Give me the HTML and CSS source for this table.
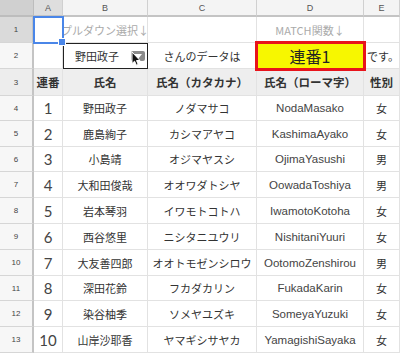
FILE: index.html
```html
<!DOCTYPE html>
<html lang="ja">
<head>
<meta charset="utf-8">
<link rel="stylesheet" href="styles.css">
</head>
<body>
<div class="sheet">
  <div class="corner"></div>
  <div class="ch sel">A</div>
  <div class="ch">B</div>
  <div class="ch">C</div>
  <div class="ch">D</div>
  <div class="ch">E</div>

  <div class="rh sel">1</div>
  <div class="c active"></div>
  <div class="c note">プルダウン選択↓</div>
  <div class="c"></div>
  <div class="c note">MATCH関数↓</div>
  <div class="c"></div>

  <div class="rh">2</div>
  <div class="c"></div>
  <div class="c dropcell">野田政子
    <span class="dd"><svg width="8" height="5" viewBox="0 0 8 5"><path d="M0 0H8L4 5Z" fill="#fff"/></svg></span>
    <svg class="cursor" width="10" height="15" viewBox="0 0 10 15"><path d="M1 1V12.5L3.6 10.2L5.4 14.2L7.2 13.4L5.5 9.5H9Z" fill="#111" stroke="#fff" stroke-width="1" stroke-linejoin="round"/></svg>
  </div>
  <div class="c">さんのデータは</div>
  <div class="c result">連番1</div>
  <div class="c left">です。</div>

  <div class="rh th-rh">3</div>
  <div class="c th">連番</div>
  <div class="c th">氏名</div>
  <div class="c th">氏名（カタカナ）</div>
  <div class="c th">氏名（ローマ字）</div>
  <div class="c th">性別</div>

  <div class="rh">4</div><div class="c num">1</div><div class="c">野田政子</div><div class="c">ノダマサコ</div><div class="c rom">NodaMasako</div><div class="c">女</div>
  <div class="rh">5</div><div class="c num">2</div><div class="c">鹿島絢子</div><div class="c">カシマアヤコ</div><div class="c rom">KashimaAyako</div><div class="c">女</div>
  <div class="rh">6</div><div class="c num">3</div><div class="c">小島靖</div><div class="c">オジマヤスシ</div><div class="c rom">OjimaYasushi</div><div class="c">男</div>
  <div class="rh">7</div><div class="c num">4</div><div class="c">大和田俊哉</div><div class="c">オオワダトシヤ</div><div class="c rom">OowadaToshiya</div><div class="c">男</div>
  <div class="rh">8</div><div class="c num">5</div><div class="c">岩本琴羽</div><div class="c">イワモトコトハ</div><div class="c rom">IwamotoKotoha</div><div class="c">女</div>
  <div class="rh">9</div><div class="c num">6</div><div class="c">西谷悠里</div><div class="c">ニシタニユウリ</div><div class="c rom">NishitaniYuuri</div><div class="c">女</div>
  <div class="rh">10</div><div class="c num">7</div><div class="c">大友善四郎</div><div class="c">オオトモゼンシロウ</div><div class="c rom">OotomoZenshirou</div><div class="c">男</div>
  <div class="rh">11</div><div class="c num">8</div><div class="c">深田花鈴</div><div class="c">フカダカリン</div><div class="c rom">FukadaKarin</div><div class="c">女</div>
  <div class="rh">12</div><div class="c num">9</div><div class="c">染谷柚季</div><div class="c">ソメヤユズキ</div><div class="c rom">SomeyaYuzuki</div><div class="c">女</div>
  <div class="rh">13</div><div class="c num">10</div><div class="c">山岸沙耶香</div><div class="c">ヤマギシサヤカ</div><div class="c rom">YamagishiSayaka</div><div class="c">女</div>
</div>
</body>
</html>
```
FILE: styles.css
```css
* { box-sizing: border-box; }
html, body {
  margin: 0;
  padding: 0;
  background: #fff;
}
body {
  width: 400px;
  height: 353px;
  overflow: hidden;
  font-family: "Noto Sans CJK JP", "Noto Sans", sans-serif;
  color: #333;
}
.sheet {
  display: grid;
  grid-template-columns: 34px 29px 85px 109px 107px 36px;
  grid-template-rows: 17px 26px 26px 27px 25px 26px 25px 26px 26px 26px 26px 25px 26px 26px;
  width: 400px;
}
.c, .ch, .rh, .corner {
  display: flex;
  align-items: center;
  justify-content: center;
  white-space: nowrap;
  position: relative;
}
.c {
  border-right: 1px solid #e2e2e2;
  border-bottom: 1px solid #e2e2e2;
  font-size: 11px;
  color: #333;
}
.corner {
  background: #d0d0d0;
  border-right: 1px solid #bdbdbd;
  border-bottom: 2px solid #bdbdbd;
}
.ch {
  background: #f4f4f4;
  border-right: 1px solid #d0d0d0;
  border-bottom: 2px solid #c4c4c4;
  font-family: "Liberation Sans", Arial, sans-serif;
  font-size: 9px;
  color: #555;
}
.rh {
  background: #f7f7f7;
  border-right: 2px solid #c4c4c4;
  border-bottom: 1px solid #d6d6d6;
  font-family: "Liberation Sans", Arial, sans-serif;
  font-size: 8px;
  color: #444;
}
.ch.sel { background: #dedede; }
.rh.sel { background: #dadada; }
.rh.th-rh { background: #ededed; }

.active {
  outline: 2px solid #4a86e8;
  outline-offset: -1px;
  z-index: 3;
}
.active::after {
  content: "";
  position: absolute;
  right: -4px;
  bottom: -4px;
  width: 6px;
  height: 6px;
  background: #4a86e8;
  border: 1px solid #fff;
}
.note {
  color: #aaa;
  font-size: 11px;
}
.dropcell {
  outline: 1px solid #222;
  outline-offset: -1px;
  z-index: 2;
  justify-content: flex-start;
  padding-left: 12px;
}
.dd {
  position: absolute;
  right: 2px;
  top: 8px;
  width: 14px;
  height: 10px;
  background: #8c8c8c;
  border-radius: 2px;
  display: flex;
  align-items: center;
  justify-content: center;
}
.cursor {
  position: absolute;
  left: 68px;
  top: 8px;
}
.result {
  background: #f7f700;
  outline: 3px solid #e8141b;
  outline-offset: -1px;
  z-index: 2;
  font-size: 16px;
  color: #222;
}
.left {
  justify-content: flex-start;
  padding-left: 3px;
  font-size: 11px;
  overflow: visible;
}
.th {
  background: #eeeeee;
  font-weight: bold;
  font-size: 11.5px;
}
.num {
  font-family: "Lato", "Liberation Sans", sans-serif;
  font-weight: 400;
  font-size: 15px;
  color: #444;
}
.rom {
  font-family: "Liberation Sans", Arial, sans-serif;
  font-size: 11.5px;
  color: #444;
}
```
